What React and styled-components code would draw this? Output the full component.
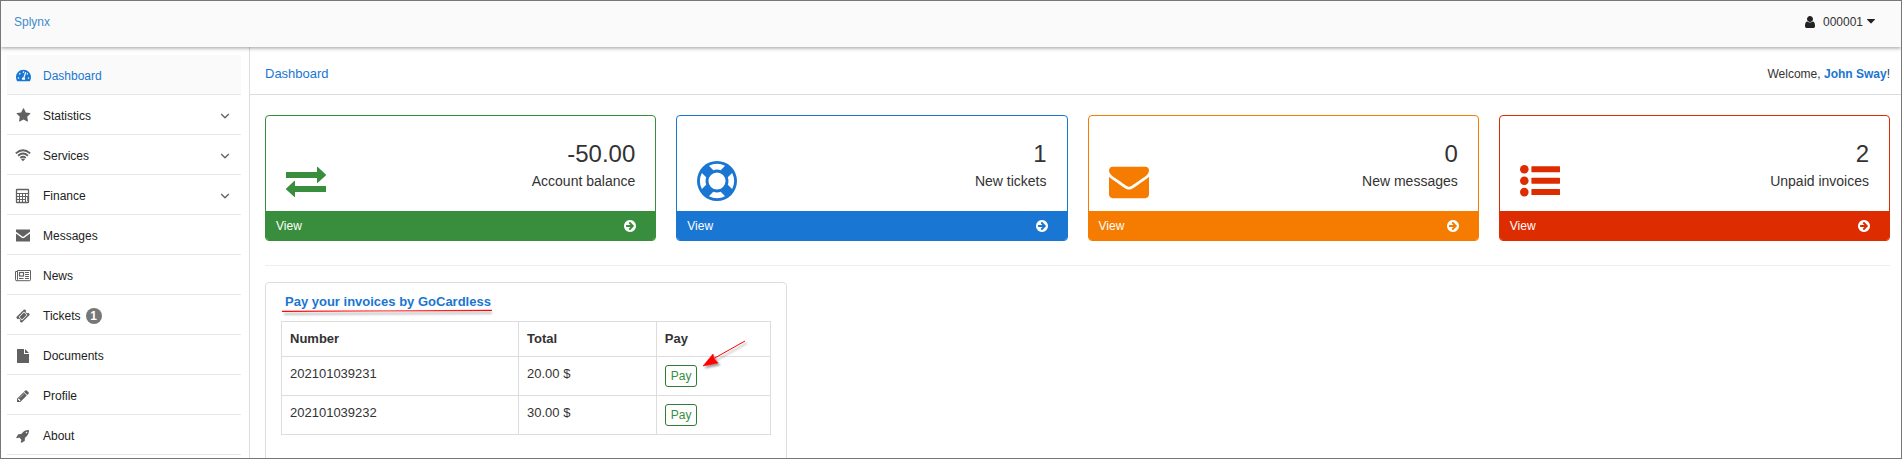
import React from "react";
import styled, { createGlobalStyle } from "styled-components";
import { FaTachometerAlt } from "react-icons/fa";

const GlobalStyle = createGlobalStyle`
  *, *::before, *::after { box-sizing: border-box; }
  body {
    margin: 0;
    background: #fff;
    color: #333;
    font-family: "Liberation Sans", Arial, sans-serif;
    font-size: 13px;
    line-height: 18px;
  }
  a { color: inherit; text-decoration: none; }
  button { font: inherit; color: inherit; cursor: pointer; }
`;

const Frame = styled.div`
  display: flex;
  flex-direction: column;
  height: 100vh;
  overflow: hidden;
  border: 1px solid #777;
`;

const TopBar = styled.header`
  display: flex;
  flex: none;
  justify-content: space-between;
  padding: 12px 26px 16px 13px;
  background: #fafafa;
  box-shadow: 0 1px 4px rgba(0, 0, 0, 0.4);
  font-size: 12px;
  z-index: 1;
`;

const Brand = styled.a`
  color: #428bca;
`;

const UserButton = styled.button`
  display: flex;
  align-items: center;
  gap: 4px;
  padding: 0;
  border: 0;
  background: none;
`;

const UserName = styled.span`
  margin-left: 2px;
`;

const Columns = styled.div`
  display: flex;
  flex: 1;
  min-height: 0;
`;

const Sidebar = styled.nav`
  flex: none;
  width: 249px;
  padding: 8px 8px 0 6px;
  border-right: 1px solid #ddd;
`;

const NavList = styled.ul`
  margin: 0;
  padding: 0;
  list-style: none;
`;

const NavItem = styled.a`
  display: flex;
  align-items: center;
  width: 100%;
  height: 40px;
  padding: 2px 11px 0 8px;
  border: 0;
  border-bottom: 1px solid #e8e8e8;
  background: ${(p) => (p.$active ? "#fafafa" : "none")};
  color: ${(p) => (p.$active ? "#1976d2" : "#222")};
  font-size: 12px;
  text-align: left;
`;

const NavIcon = styled.span`
  display: flex;
  justify-content: center;
  width: 16px;
  margin-right: 12px;
  color: ${(p) => (p.$active ? "#1976d2" : "#616161")};
`;

const NavChevron = styled.svg`
  margin-left: auto;
`;

const Badge = styled.span`
  min-width: 16px;
  height: 16px;
  margin-left: 5px;
  border-radius: 8px;
  background: #777;
  color: #fff;
  font-weight: 700;
  line-height: 16px;
  text-align: center;
`;

const Main = styled.main`
  flex: 1;
  min-width: 0;
`;

const PageHeader = styled.div`
  display: flex;
  align-items: center;
  justify-content: space-between;
  height: 48px;
  padding: 6px 11px 0 15px;
  border-bottom: 1px solid #ddd;
`;

const PageTitle = styled.h1`
  margin: 0;
  color: #1976d2;
  font-size: 13px;
  font-weight: 400;
`;

const Welcome = styled.span`
  font-size: 12px;
  b { color: #1976d2; }
`;

const Content = styled.div`
  padding: 20px 11px 20px 15px;
`;

const Cards = styled.section`
  display: grid;
  grid-template-columns: repeat(4, 1fr);
  gap: 20px;
  padding-bottom: 24px;
  border-bottom: 1px solid #eee;
`;

const Card = styled.article`
  overflow: hidden;
  border: 1px solid ${(p) => p.$color};
  border-radius: 4px;
`;

const CardBody = styled.div`
  display: flex;
  align-items: flex-end;
  justify-content: space-between;
  padding: 23px 20px 10px;
  color: ${(p) => p.$color};
`;

const Stat = styled.div`
  padding-bottom: 10px;
  color: #333;
  text-align: right;
`;

const StatValue = styled.div`
  font-size: 24px;
  line-height: 30px;
`;

const StatLabel = styled.div`
  margin-top: 2px;
  font-size: 14px;
  line-height: 20px;
`;

const CardLink = styled.a`
  display: flex;
  align-items: center;
  justify-content: space-between;
  height: 29px;
  padding: 0 19px 0 10px;
  background: ${(p) => p.$color};
  color: #fff;
  font-size: 12px;
`;

const Panels = styled.section`
  display: grid;
  grid-template-columns: repeat(3, 1fr);
  gap: 30px;
  margin-top: 16px;
`;

const Panel = styled.article`
  min-height: 300px;
  padding: 10px 15px;
  border: 1px solid #ddd;
  border-radius: 4px;
`;

const PanelTitle = styled.h2`
  position: relative;
  width: fit-content;
  margin: 0 0 10px 4px;
  color: #1976d2;
  font-size: 13px;
  line-height: 18px;
`;

const Underline = styled.svg`
  position: absolute;
  left: -3px;
  bottom: -6px;
  width: calc(100% + 4px);
  height: 8px;
  overflow: visible;
`;

const InvoiceTable = styled.table`
  width: 100%;
  border-collapse: collapse;
  table-layout: fixed;
  th, td {
    padding: 8px;
    border: 1px solid #ddd;
    text-align: left;
    vertical-align: top;
  }
`;

const Column = styled.col`
  width: ${(p) => p.$width};
`;

const PayCell = styled.div`
  position: relative;
  display: flex;
`;

const PayButton = styled.button`
  height: 22px;
  padding: 0 5px;
  border: 1px solid #2e7d32;
  border-radius: 3px;
  background: #fff;
  color: #388e3c;
  font-size: 12px;
`;

const Pointer = styled.svg`
  position: absolute;
  left: 35px;
  top: -26px;
  pointer-events: none;
`;

const StarIcon = () => (
  <svg width="15" height="15" viewBox="0 0 1792 1792" fill="currentColor">
    <path d="M1728 647q0 22-26 48l-363 354 86 500q1 7 1 20 0 21-10.5 35.5t-30.5 14.5q-19 0-40-12l-449-236-449 236q-22 12-40 12-21 0-31.5-14.5t-10.5-35.5q0-6 2-20l86-500-364-354q-25-27-25-48 0-37 56-46l502-73 225-455q19-41 49-41t49 41l225 455 502 73q56 9 56 46z" />
  </svg>
);

const WifiIcon = () => (
  <svg width="16" height="16" viewBox="0 0 16 16" fill="none" stroke="currentColor" strokeWidth="1.9">
    <path d="M.8 5.4Q8-1 15.2 5.4M3.1 7.7Q8 3.4 12.9 7.7M5.3 10Q8 7.7 10.7 10" />
    <path d="M6 11.2Q8 9.8 10 11.2L8 13.2Z" fill="currentColor" stroke="none" />
  </svg>
);

const CalculatorIcon = () => (
  <svg width="16" height="16" viewBox="0 0 16 16" fill="none" stroke="currentColor">
    <rect x="1.5" y="1.5" width="12" height="13" rx=".6" strokeWidth="1.3" />
    <path d="M1.5 5.5h12M1.5 8.5h12M1.5 11.5h9M4.5 5.5v9M7.5 5.5v9M10.5 5.5v9" />
    <path d="M12.5 9v4" strokeWidth=".8" />
  </svg>
);

const MailIcon = () => (
  <svg width="16" height="16" viewBox="0 0 16 16" fill="currentColor">
    <path d="M1 1.5h14v2.3L8.6 8.6q-.6.4-1.2 0L1 3.8z" />
    <path d="M1 5.4l5.7 4.3q1.3.9 2.6 0L15 5.4v8.1H1z" />
  </svg>
);

const NewsIcon = () => (
  <svg width="16" height="16" viewBox="0 0 16 16" fill="none" stroke="currentColor">
    <path d="M2.5 2.5v9.2q0 1-1 1t-1-1V3.5h2M2.5 2.5h13v9.2q0 1-1 1H1.5" />
    <rect x="4.5" y="4.5" width="4" height="3.5" strokeWidth="1.2" />
    <path d="M10 4.5h4M10 6.5h4M10 8.5h4M4 10.5h4.5M10 10.5h4" />
  </svg>
);

const TicketIcon = () => (
  <svg width="14" height="14" viewBox="0 0 1792 1792" fill="currentColor">
    <path d="M1024 452l316 316-572 572-316-316zm-211 979l618-618q19-19 19-45t-19-45l-362-362q-18-18-45-18t-45 18l-618 618q-19 19-19 45t19 45l362 362q18 18 45 18t45-18zm889-637l-907 908q-37 37-90.5 37t-90.5-37l-126-125q56-56 56-136t-56-136-136-56-136 56l-125-126q-37-37-37-90.5t37-90.5l907-906q37-37 90.5-37t90.5 37l125 125q-56 56-56 136t56 136 136 56 136-56l126 125q37 37 37 90.5t-37 90.5z" />
  </svg>
);

const FileIcon = () => (
  <svg width="16" height="16" viewBox="0 0 16 16" fill="currentColor">
    <path d="M2 1h7v5h5v8.4q0 .6-.6.6H2.6q-.6 0-.6-.6z" />
    <path d="M10 1l4 4h-4z" />
  </svg>
);

const PencilIcon = () => (
  <svg width="14" height="14" viewBox="0 0 1792 1792" fill="currentColor">
    <path d="M491 1536l91-91-235-235-91 91v107h128v128h107zm523-928q0-22-22-22-10 0-17 7l-542 542q-7 7-7 17 0 22 22 22 10 0 17-7l542-542q7-7 7-17zm-54-192l416 416-832 832h-416v-416zm683 96q0 53-37 90l-166 166-416-416 166-165q36-38 90-38 53 0 91 38l235 234q37 39 37 91z" />
  </svg>
);

const RocketIcon = () => (
  <svg width="14" height="14" viewBox="0 0 1792 1792" fill="currentColor">
    <path d="M1440 448q0-40-28-68t-68-28-68 28-28 68 28 68 68 28 68-28 28-68zm224-288q0 249-75.5 430.5t-253.5 360.5q-81 80-195 176l-20 379q-2 16-16 26l-384 224q-7 4-16 4-12 0-23-9l-64-64q-13-14-8-32l85-276-281-281-276 85q-3 1-9 1-14 0-23-9l-64-64q-17-19-5-39l224-384q10-14 26-16l379-20q96-114 176-195 188-187 358-258t431-71q14 0 24 9.5t10 22.5z" />
  </svg>
);

const UserIcon = () => (
  <svg width="14" height="14" viewBox="0 0 1792 1792" fill="#222">
    <path d="M1536 1399q0 109-62.5 187t-150.5 78h-854q-88 0-150.5-78t-62.5-187q0-85 8.5-160.5t31.5-152 58.5-131 94-89 134.5-34.5q131 128 313 128t313-128q76 0 134.5 34.5t94 89 58.5 131 31.5 152 8.5 160.5zm-256-887q0 159-112.5 271.5t-271.5 112.5-271.5-112.5-112.5-271.5 112.5-271.5 271.5-112.5 271.5 112.5 112.5 271.5z" />
  </svg>
);

const CaretIcon = () => (
  <svg width="8" height="6" viewBox="0 0 8 6" fill="#222">
    <path d="M.4 0h7.2q.6.1.2.7L4.4 4.3q-.4.4-.8 0L.2.7Q-.2.1.4 0z" />
  </svg>
);

const ArrowCircleIcon = () => (
  <svg width="12" height="12" viewBox="128 128 1536 1536" fill="currentColor">
    <path d="M1413 896q0-27-18-45l-91-91-362-362q-18-18-45-18t-45 18l-91 91q-18 18-18 45t18 45l189 189h-502q-26 0-45 19t-19 45v128q0 26 19 45t45 19h502l-189 189q-19 19-19 45t19 45l91 91q18 18 45 18t45-18l362-362 91-91q18-18 18-45zm251 0q0 209-103 385.5t-279.5 279.5-385.5 103-385.5-103-279.5-279.5-103-385.5 103-385.5 279.5-279.5 385.5-103 385.5 103 279.5 279.5 103 385.5z" />
  </svg>
);

const ExchangeIcon = () => (
  <svg width="40" height="40" viewBox="0 0 40 40" fill="currentColor">
    <path d="M0 11h31V6.4q0-.8.8-.4l8 7.5q.5.5 0 1l-8 7.3q-.8.4-.8-.4V17H0z" />
    <path d="M40 25H9v-4.6q0-.8-.8-.4l-8 7.5q-.5.5 0 1l8 7.3q.8.4.8-.4V31h31z" />
  </svg>
);

const LifeRingIcon = () => (
  <svg width="40" height="40" viewBox="0 0 1792 1792" fill="currentColor">
    <path d="M896 0q182 0 348 71t286 191 191 286 71 348-71 348-191 286-286 191-348 71-348-71-286-191-191-286-71-348 71-348 191-286 286-191 348-71zm0 128q-190 0-361 90l194 194q82-28 167-28t167 28l194-194q-171-90-361-90zm-678 1129l194-194q-28-82-28-167t28-167l-194-194q-90 171-90 361t90 361zm678 407q190 0 361-90l-194-194q-82 28-167 28t-167-28l-194 194q171 90 361 90zm0-384q159 0 271.5-112.5t112.5-271.5-112.5-271.5-271.5-112.5-271.5 112.5-112.5 271.5 112.5 271.5 271.5 112.5zm484-217l194 194q90-171 90-361t-90-361l-194 194q28 82 28 167t-28 167z" />
  </svg>
);

const EnvelopeIcon = () => (
  <svg width="40" height="40" viewBox="0 0 1792 1792" fill="currentColor">
    <path d="M1792 710v794q0 66-47 113t-113 47h-1472q-66 0-113-47t-47-113v-794q44 49 101 87 362 246 497 345 57 42 92.5 65.5t94.5 48 110 24.5h2q51 0 110-24.5t94.5-48 92.5-65.5q170-123 498-345 57-39 100-87zm0-294q0 79-49 151t-122 123q-376 261-468 325-10 7-42.5 31t-54 38.5-52 32.5-57.5 27-50 9h-2q-23 0-50-9t-57.5-27-52-32.5-54-38.5-42.5-31q-91-64-262-182.5t-205-142.5q-62-42-117-115.5t-55-136.5q0-78 41.5-130t118.5-52h1472q65 0 112.5 47t47.5 113z" />
  </svg>
);

const ListIcon = () => (
  <svg width="40" height="40" viewBox="0 0 40 40" fill="currentColor">
    {[8.3, 19.7, 31.1].map((y) => (
      <g key={y}>
        <circle cx="4.3" cy={y} r="4.3" />
        <rect x="11.4" y={y - 3} width="28.6" height="6" rx=".6" />
      </g>
    ))}
  </svg>
);

const navItems = [
  { label: "Dashboard", icon: <FaTachometerAlt size={15} />, active: true },
  { label: "Statistics", icon: <StarIcon />, expands: true },
  { label: "Services", icon: <WifiIcon />, expands: true },
  { label: "Finance", icon: <CalculatorIcon />, expands: true },
  { label: "Messages", icon: <MailIcon /> },
  { label: "News", icon: <NewsIcon /> },
  { label: "Tickets", icon: <TicketIcon />, count: 1 },
  { label: "Documents", icon: <FileIcon /> },
  { label: "Profile", icon: <PencilIcon /> },
  { label: "About", icon: <RocketIcon /> },
];

const cards = [
  { value: "-50.00", label: "Account balance", color: "#388e3c", icon: <ExchangeIcon /> },
  { value: "1", label: "New tickets", color: "#1976d2", icon: <LifeRingIcon /> },
  { value: "0", label: "New messages", color: "#f57c00", icon: <EnvelopeIcon /> },
  { value: "2", label: "Unpaid invoices", color: "#dd2c00", icon: <ListIcon /> },
];

const invoices = [
  { number: "202101039231", total: "20.00 $", highlighted: true },
  { number: "202101039232", total: "30.00 $" },
];

function NavEntry({ label, icon, active, expands, count }) {
  const target = expands
    ? { as: "button", type: "button", "aria-expanded": false }
    : { href: "#" + label.toLowerCase() };
  return (
    <li>
      <NavItem {...target} $active={active}>
        <NavIcon $active={active}>{icon}</NavIcon>
        {label}
        {count && <Badge>{count}</Badge>}
        {expands && (
          <NavChevron width="10" height="8" viewBox="0 0 10 8" fill="none" stroke="#666" strokeWidth="1.4">
            <path d="M1.2 2L5 5.8 8.8 2" />
          </NavChevron>
        )}
      </NavItem>
    </li>
  );
}

export default function App() {
  return (
    <Frame>
      <GlobalStyle />
      <TopBar>
        <Brand href="#home">Splynx</Brand>
        <UserButton type="button">
          <UserIcon />
          <UserName>000001</UserName>
          <CaretIcon />
        </UserButton>
      </TopBar>
      <Columns>
        <Sidebar>
          <NavList>
            {navItems.map((item) => (
              <NavEntry key={item.label} {...item} />
            ))}
          </NavList>
        </Sidebar>
        <Main>
          <PageHeader>
            <PageTitle>Dashboard</PageTitle>
            <Welcome>
              Welcome, <b>John Sway</b>!
            </Welcome>
          </PageHeader>
          <Content>
            <Cards>
              {cards.map((card) => (
                <Card key={card.label} $color={card.color}>
                  <CardBody $color={card.color}>
                    {card.icon}
                    <Stat>
                      <StatValue>{card.value}</StatValue>
                      <StatLabel>{card.label}</StatLabel>
                    </Stat>
                  </CardBody>
                  <CardLink href="#view" $color={card.color}>
                    View
                    <ArrowCircleIcon />
                  </CardLink>
                </Card>
              ))}
            </Cards>
            <Panels>
              <Panel>
                <PanelTitle>
                  Pay your invoices by GoCardless
                  <Underline viewBox="0 0 210 8" preserveAspectRatio="none">
                    <defs>
                      <linearGradient id="fade" gradientUnits="userSpaceOnUse" x1="0" y1="0" x2="210" y2="0">
                        <stop offset="0" stopColor="#f00" />
                        <stop offset=".5" stopColor="#ff5050" />
                        <stop offset="1" stopColor="#f00" />
                      </linearGradient>
                      <filter id="soft" x="-5%" y="-200%" width="110%" height="500%">
                        <feGaussianBlur stdDeviation="1" />
                      </filter>
                    </defs>
                    <path d="M2 4L210 3V5L2 6z" fill="#000" opacity=".25" filter="url(#soft)" />
                    <path d="M0 1.8L210 .8V2L0 3z" fill="url(#fade)" />
                  </Underline>
                </PanelTitle>
                <InvoiceTable>
                  <colgroup>
                    <Column $width="48.5%" />
                    <Column $width="28.2%" />
                    <Column />
                  </colgroup>
                  <thead>
                    <tr>
                      <th scope="col">Number</th>
                      <th scope="col">Total</th>
                      <th scope="col">Pay</th>
                    </tr>
                  </thead>
                  <tbody>
                    {invoices.map((invoice) => (
                      <tr key={invoice.number}>
                        <td>{invoice.number}</td>
                        <td>{invoice.total}</td>
                        <td>
                          <PayCell>
                            <PayButton type="button">Pay</PayButton>
                            {invoice.highlighted && (
                              <Pointer width="52" height="36" viewBox="0 0 52 36">
                                <defs>
                                  <filter id="drop" x="-20%" y="-20%" width="150%" height="150%">
                                    <feDropShadow dx="2" dy="2" stdDeviation="1" floodOpacity=".4" />
                                  </filter>
                                </defs>
                                <g filter="url(#drop)" fill="#f00" stroke="#f00">
                                  <path d="M13 20L45 2" />
                                  <path d="M3 27L13 15L14 19.5L18 24Z" strokeWidth=".6" />
                                </g>
                              </Pointer>
                            )}
                          </PayCell>
                        </td>
                      </tr>
                    ))}
                  </tbody>
                </InvoiceTable>
              </Panel>
            </Panels>
          </Content>
        </Main>
      </Columns>
    </Frame>
  );
}
